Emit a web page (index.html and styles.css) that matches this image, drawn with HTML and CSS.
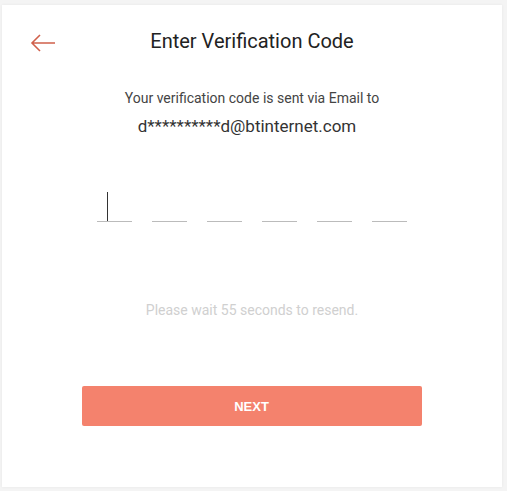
FILE: index.html
```html
<!DOCTYPE html>
<html lang="en">
<head>
    <meta charset="UTF-8">
    <title>Enter Verification Code</title>
    <link rel="stylesheet" href="styles.css">
</head>
<body>
    <div class="card">
        <div class="header">
            <a href="#" class="back">
                <svg width="26" height="18" viewBox="0 0 26 18">
                    <path d="M25 9H2M10 1L2 9l8 8" fill="none" stroke="#d0604b" stroke-width="1.6"/>
                </svg>
            </a>
            <h1>Enter Verification Code</h1>
        </div>
        <p class="sent">Your verification code is sent via Email to</p>
        <p class="email">d**********d@btinternet.com</p>
        <div class="code">
            <div class="digit active"><span class="cursor"></span></div>
            <div class="digit"></div>
            <div class="digit"></div>
            <div class="digit"></div>
            <div class="digit"></div>
            <div class="digit"></div>
        </div>
        <p class="resend">Please wait 55 seconds to resend.</p>
        <button class="next">NEXT</button>
    </div>
</body>
</html>
```

FILE: styles.css
```css
body {
    margin: 0;
    background: #f4f4f4;
    font-family: Roboto, "Liberation Sans", sans-serif;
    padding: 5px 5px 4px 2px;
}
.card {
    background: #fff;
    height: 482px;
    box-sizing: border-box;
    box-shadow: 0 0 3px rgba(0, 0, 0, 0.06);
    display: flex;
    flex-direction: column;
    align-items: center;
    position: relative;
}
.header {
    width: 100%;
    position: relative;
    padding-top: 24px;
    height: 50px;
    box-sizing: border-box;
}
.back {
    position: absolute;
    left: 28px;
    top: 29px;
    display: block;
    line-height: 0;
}
h1 {
    margin: 0;
    text-align: center;
    font-size: 20px;
    font-weight: 400;
    color: #222;
}
.sent {
    margin: 35px 0 0;
    font-size: 14px;
    color: #444;
}
.email {
    margin: 10px 10px 0 0;
    font-size: 17px;
    color: #333;
}
.code {
    display: flex;
    gap: 20px;
    margin-top: 55px;
}
.digit {
    width: 35px;
    height: 30px;
    border-bottom: 1px solid #bbb;
    position: relative;
}
.cursor {
    position: absolute;
    left: 10px;
    top: 1px;
    width: 1px;
    height: 29px;
    background: #333;
}
.resend {
    margin: 80px 0 0;
    font-size: 14px;
    color: #d0d0d0;
}
.next {
    margin-top: 68px;
    width: 340px;
    height: 40px;
    border: 0;
    border-radius: 2px;
    background: #f4826d;
    color: #fff;
    font-family: "Liberation Sans", Arial, sans-serif;
    font-size: 13px;
    font-weight: 700;
    margin-left: -1px;
}
```
